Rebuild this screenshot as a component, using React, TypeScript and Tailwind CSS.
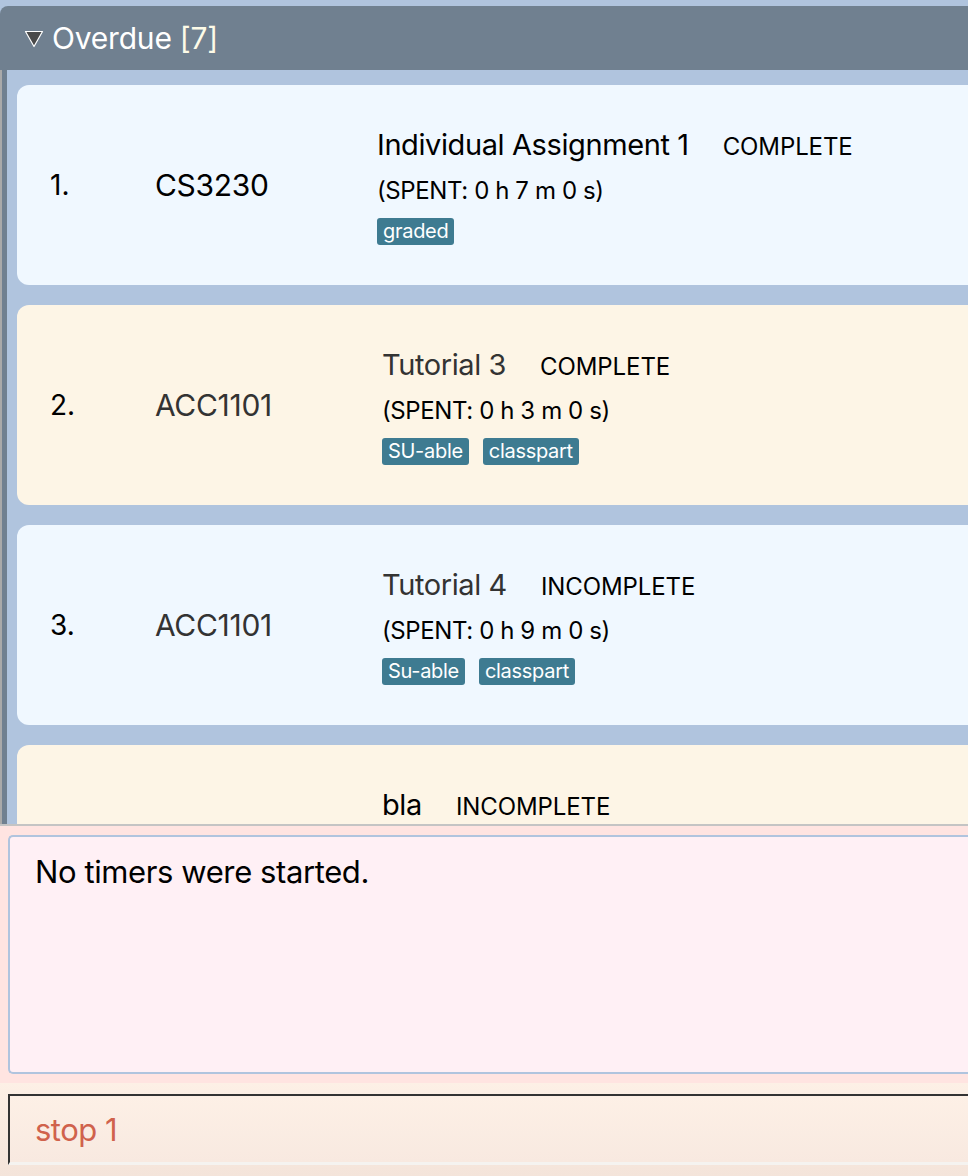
import React from 'react';

type Task = {
  index: number;
  module: string;
  title: string;
  status: string;
  spent: string;
  tags: string[];
  dim?: boolean;
};

const tasks: Task[] = [
  { index: 1, module: 'CS3230', title: 'Individual Assignment 1', status: 'COMPLETE', spent: '0 h 7 m 0 s', tags: ['graded'] },
  { index: 2, module: 'ACC1101', title: 'Tutorial 3', status: 'COMPLETE', spent: '0 h 3 m 0 s', tags: ['SU-able', 'classpart'], dim: true },
  { index: 3, module: 'ACC1101', title: 'Tutorial 4', status: 'INCOMPLETE', spent: '0 h 9 m 0 s', tags: ['Su-able', 'classpart'], dim: true },
  { index: 4, module: 'CS2103T', title: 'bla', status: 'INCOMPLETE', spent: '0 h 0 m 0 s', tags: ['misc'] },
];

const font = "font-['Inter','Liberation_Sans',sans-serif]";

const TaskCard = ({ task }: { task: Task }) => {
  const bg = task.index % 2 === 1 ? 'bg-[#f0f8ff]' : 'bg-[#fdf5e6]';
  const soft = task.dim ? 'text-[#333333]' : 'text-black';
  const moduleWidth = task.index === 1 ? 'w-[222px]' : 'w-[227px]';
  return (
    <div className={`${bg} shrink-0 h-[200px] w-[980px] rounded-[12px] flex items-center`}>
      <div className="w-[138px] pl-[33px] text-[28px] text-black">{task.index}.</div>
      <div className={`${moduleWidth} text-[30px] tracking-[-0.3px] ${soft}`}>{task.module}</div>
      <div className="flex flex-col">
        <div className="flex items-baseline gap-[34px] leading-[36px] pt-[2px]">
          <span className={`text-[29px] tracking-[-0.4px] ${soft}`}>{task.title}</span>
          <span className="text-[24px] tracking-[-0.1px] text-black">{task.status}</span>
        </div>
        <div className="text-[24px] tracking-[-0.4px] leading-[30px] text-black mt-[11px]">(SPENT: {task.spent})</div>
        <div className="flex gap-[14px] mt-[12px]">
          {task.tags.map((t) => (
            <span key={t} className="bg-[#3e7b91] text-white text-[20px] tracking-[-0.3px] leading-[27px] px-[6px] rounded-[3px]">
              {t}
            </span>
          ))}
        </div>
      </div>
    </div>
  );
};

const App = () => {
  return (
    <div className={`${font} w-[968px] h-[1176px] overflow-hidden flex flex-col bg-[#b0c4de]`}>
      <div className="h-[6px] shrink-0" />
      <div className="h-[64px] shrink-0 bg-[#708090] rounded-tl-[8px] flex items-center pl-[24px]">
        <svg width="20" height="18" viewBox="0 0 20 18" className="mr-[8px] mt-[2px]">
          <polygon points="1.5,1.5 18.5,1.5 10,16.5" fill="#4a4a4a" stroke="#ffffff" strokeWidth="1.2" strokeLinejoin="round" />
        </svg>
        <span className="text-white text-[30px] tracking-[-0.2px]">Overdue</span>
        <span className="text-[#fdfbe8] text-[30px] tracking-[-0.2px] ml-[8px]">[7]</span>
      </div>
      <div className="h-[754px] shrink-0 flex overflow-hidden">
        <div className="w-[2px] bg-[#a9a9a9]" />
        <div className="w-[5px] bg-[#708090]" />
        <div className="flex-1 flex flex-col gap-[20px] pt-[15px] pl-[10px] overflow-hidden">
          {tasks.map((t) => (
            <TaskCard key={t.index} task={t} />
          ))}
        </div>
      </div>
      <div className="h-[2px] shrink-0 bg-[#c4c4c4]" />
      <div className="h-[257px] shrink-0 bg-[#ffe4e1] pt-[9px] pl-[8px] pb-[9px]">
        <div className="h-full border-2 border-r-0 border-[#b0c4de] rounded-l-[5px] bg-[#fff0f5] pl-[25px] pt-[12px]">
          <p className="text-[31px] tracking-[-0.4px] text-black">No timers were started.</p>
        </div>
      </div>
      <div className="flex-1 bg-gradient-to-b from-[#fdf0e6] to-[#f4e4da] pt-[11px] pl-[8px]">
        <div className="h-[71px] border-t-2 border-l-2 border-[#333333] border-b-[3px] border-b-[#f5f3f0] bg-gradient-to-b from-[#fdf0e6] to-[#f8e9e0] flex items-center pl-[25px]">
          <span className="text-[31px] tracking-[-0.5px] text-[#d0624c] mt-[3px]">stop 1</span>
        </div>
      </div>
    </div>
  );
};

export default App;
